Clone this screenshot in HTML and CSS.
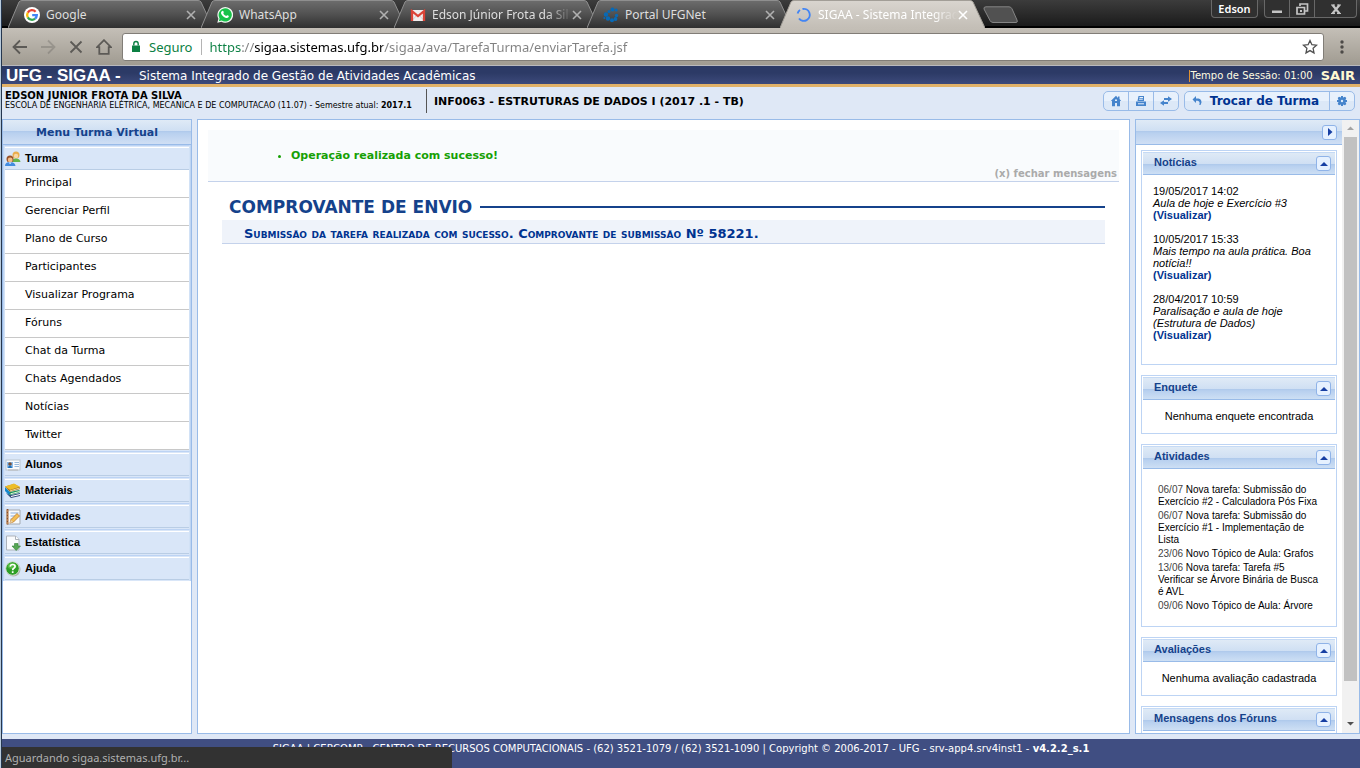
FILE: index.html
```html
<!DOCTYPE html>
<html lang="pt-BR">
<head>
<meta charset="utf-8">
<title>SIGAA - Sistema Integrado de Gestão de Atividades Acadêmicas</title>
<link rel="stylesheet" href="styles.css">
</head>
<body>
<svg class="defs" aria-hidden="true">
  <defs>
    <linearGradient id="tab-dark" x1="0" y1="0" x2="0" y2="1"><stop offset="0" stop-color="#6d6d6d"/><stop offset=".45" stop-color="#545454"/><stop offset="1" stop-color="#303030"/></linearGradient>
    <linearGradient id="tab-light" x1="0" y1="0" x2="0" y2="1"><stop offset="0" stop-color="#d9d5cf"/><stop offset="1" stop-color="#c3beb6"/></linearGradient>
    <symbol id="shape" viewBox="0 0 205 28" preserveAspectRatio="none"><path d="M0 28 L11 2 Q12 .5 14 .5 H190 Q192 .5 193 2 L205 28"/></symbol>
  </defs>
</svg>
<div class="window">
  <header class="browser">
    <div class="strip">
      <nav class="tabs" aria-label="Guias">
        <div class="tab">
          <svg class="tab-bg" aria-hidden="true"><use href="#shape"/></svg>
          <svg class="fav" viewBox="0 0 16 16"><circle cx="8" cy="8" r="8" fill="#fff"/><g fill="none" stroke-width="2.3"><path d="M11.6 4.7A4.8 4.8 0 0 0 3.8 5.6" stroke="#ea4335"/><path d="M3.8 5.6a4.8 4.8 0 0 0 0 4.8" stroke="#fbbc05"/><path d="M3.8 10.4a4.8 4.8 0 0 0 7.3 1.2" stroke="#34a853"/><path d="M11.1 11.6A4.8 4.8 0 0 0 12.8 8.1H8.2" stroke="#4285f4"/></g></svg>
          <span class="tab-name">Google</span>
          <button class="tab-x" aria-label="Fechar guia"><svg viewBox="0 0 10 10"><path d="M1 1l8 8M9 1L1 9"/></svg></button>
        </div>
        <div class="tab">
          <svg class="tab-bg" aria-hidden="true"><use href="#shape"/></svg>
          <svg class="fav" viewBox="0 0 16 16"><path d="M.3 15.8l1.1-4A7.9 7.9 0 1 1 4.4 14.800z" fill="#f2f8f2"/><path d="M1.800 14.300l.8-2.900A6.600 6.600 0 1 1 4.700 13.500z" fill="#18c24a"/><path d="M5.300 3.900c.5-.4 1 0 1.200.6.4 1 .3 1-.2 1.700.6 1.300 1.600 2.200 2.900 2.800.8-.9.800-1 1.800-.5 1 .5.900.6.700 1.300-.5 1.300-2 1.400-3.300.9-2.100-.8-3.400-2.200-4.200-3.900-.4-1-.2-2.200 1.100-2.900z" fill="#fff"/></svg>
          <span class="tab-name">WhatsApp</span>
          <button class="tab-x" aria-label="Fechar guia"><svg viewBox="0 0 10 10"><path d="M1 1l8 8M9 1L1 9"/></svg></button>
        </div>
        <div class="tab">
          <svg class="tab-bg" aria-hidden="true"><use href="#shape"/></svg>
          <svg class="fav" viewBox="0 0 16 16"><path d="M1 3h14v11H1z" fill="#f1eeee"/><path d="M3 12.500l4-4.500M13 12.500L9 8" stroke="#d5d0d0"/><path d="M2 14V4.200l6 4.900 6-4.900V14" fill="none" stroke="#db4437" stroke-width="2.300"/></svg>
          <span class="tab-name fade">Edson Júnior Frota da Sil</span>
          <button class="tab-x" aria-label="Fechar guia"><svg viewBox="0 0 10 10"><path d="M1 1l8 8M9 1L1 9"/></svg></button>
        </div>
        <div class="tab">
          <svg class="tab-bg" aria-hidden="true"><use href="#shape"/></svg>
          <svg class="fav" viewBox="0 0 16 16"><g fill="#0869b5"><circle cx="9.500" cy="2.500" r="2"/><circle cx="13.200" cy="3" r="1.500"/><circle cx="6" cy="4.500" r="1.500"/><circle cx="3" cy="7.500" r="2.200"/><circle cx="5" cy="11.500" r="2.200"/><circle cx="9" cy="13.200" r="2"/><circle cx="12.500" cy="12" r="1.900"/><circle cx="13.500" cy="8.500" r="1.700"/><circle cx="1.300" cy="11" r="1"/></g></svg>
          <span class="tab-name">Portal UFGNet</span>
          <button class="tab-x" aria-label="Fechar guia"><svg viewBox="0 0 10 10"><path d="M1 1l8 8M9 1L1 9"/></svg></button>
        </div>
        <div class="tab active">
          <svg class="tab-bg" aria-hidden="true"><use href="#shape"/></svg>
          <svg class="fav" viewBox="0 0 16 16"><path d="M6.500 2A6 6 0 1 1 3 11.500M1.600 6.500A6 6 0 0 1 4 3" fill="none" stroke="#4285f4" stroke-width="1.900"/></svg>
          <span class="tab-name fade">SIGAA - Sistema Integrad</span>
          <button class="tab-x" aria-label="Fechar guia"><svg viewBox="0 0 10 10"><path d="M1 1l8 8M9 1L1 9"/></svg></button>
        </div>
      </nav>
      <button class="new-tab" aria-label="Nova guia"><svg viewBox="0 0 36 18"><path d="M3 .8H26q2 0 3 2L34 14q1 2.500-1 2.500H10q-2 0-3-2L1 3Q.500.800 3 .800z" fill="#515151" stroke="#858585"/></svg></button>
      <div class="controls">
        <button class="profile">Edson</button>
        <div class="win-buttons">
          <button aria-label="Minimizar"><svg viewBox="0 0 14 14"><path d="M2 8.500h10v2.500H2z" fill="#c5c5c5"/></svg></button>
          <button aria-label="Restaurar"><svg viewBox="0 0 14 14"><path d="M5 4V2h7.500v7H10M2 5.500h7.500v6.500H2z" fill="none" stroke="#c5c5c5" stroke-width="1.700"/><path d="M5 8h2v2H5z" fill="#c5c5c5"/></svg></button>
          <button class="wide" aria-label="Fechar"><svg viewBox="0 0 14 14"><path d="M3.500 3l7 8.500M10.500 3l-7 8.500" stroke="#c5c5c5" stroke-width="2.200"/><path d="M2 3h4M8 3h4M2 11.500h4M8 11.500h4" stroke="#c5c5c5"/></svg></button>
        </div>
      </div>
    </div>
    <div class="toolbar">
      <button class="tool" aria-label="Voltar"><svg viewBox="0 0 16 16"><path d="M15 8H2M8 1.500L1.500 8 8 14.500"/></svg></button>
      <button class="tool off" aria-label="Avançar"><svg viewBox="0 0 16 16"><path d="M1 8h13M8 1.500L14.500 8 8 14.500"/></svg></button>
      <button class="tool" aria-label="Parar"><svg viewBox="0 0 16 16"><path d="M2.500 2.500l11 11M13.500 2.500l-11 11"/></svg></button>
      <button class="tool" aria-label="Página inicial"><svg viewBox="0 0 16 16"><path d="M8 1.200L1 8.200h2.300v6.600h9.400V8.200H15z"/></svg></button>
      <div class="omnibox">
        <svg class="lock" viewBox="0 0 10 12"><path d="M1 5h8v6.500H1z" fill="#0b8043"/><path d="M2.800 5V3.200a2.200 2.200 0 0 1 4.400 0V5" fill="none" stroke="#0b8043" stroke-width="1.400"/></svg>
        <label class="secure" for="url">Seguro</label>
        <input class="url" id="url" type="text" value="https://sigaa.sistemas.ufg.br/sigaa/ava/TarefaTurma/enviarTarefa.jsf">
        <button class="star" aria-label="Favoritar"><svg viewBox="0 0 16 16"><path d="M8 1.500l1.900 4.200 4.600.5-3.400 3.100.9 4.600L8 11.600l-4 2.300.9-4.600L1.500 6.200l4.600-.5z" fill="none" stroke="#505050" stroke-width="1.300"/></svg></button>
      </div>
      <button class="more" aria-label="Menu"><svg viewBox="0 0 4 14"><circle cx="2" cy="2" r="1.700"/><circle cx="2" cy="7" r="1.700"/><circle cx="2" cy="12" r="1.700"/></svg></button>
    </div>
  </header>

  <div class="page">
    <header class="banner">
      <h1>UFG - SIGAA -</h1>
      <span class="system">Sistema Integrado de Gestão de Atividades Acadêmicas</span>
      <span class="session">Tempo de Sessão: 01:00</span>
      <a class="exit" href="#">SAIR</a>
    </header>
    <section class="info">
      <div class="user">
        <strong>EDSON JUNIOR FROTA DA SILVA</strong>
        <span>ESCOLA DE ENGENHARIA ELÉTRICA, MECANICA E DE COMPUTACAO (11.07) - Semestre atual: <b>2017.1</b></span>
      </div>
      <h2>INF0063 - ESTRUTURAS DE DADOS I (2017 .1 - TB)</h2>
      <div class="group">
        <button aria-label="Início"><svg viewBox="0 0 12 12"><path d="M6 .8L.8 6H2v5.200h3V8h2v3.200h3V6h1.200L9.500 4V1.500H8V3z"/><path d="M5 4.500h2v1.500H5z" fill="#e3eefb"/></svg></button>
        <button aria-label="Imprimir"><svg viewBox="0 0 12 12"><path d="M3.500 1h5.500v5H2.500zM1 6.500h10v4.500H1z"/><path d="M4.500 2.500h3.500M4 4.200h3.800M3 8.800h6" stroke="#e8f1fb"/></svg></button>
        <button aria-label="Alternar"><svg viewBox="0 0 12 12"><path d="M8 1.200L12 4 8 6.800V5H4V3h4zM4 5.200L0 8l4 2.800V9h4V7H4z"/></svg></button>
      </div>
      <div class="group">
        <button class="switch"><svg viewBox="0 0 12 12"><path d="M1.500 4.500L5 1v2.400h2.500Q10.500 4 10.500 7.500L9.500 10 8.300 10Q9.500 6 6.500 5.700H5V8z"/></svg>Trocar de Turma</button>
        <button aria-label="Configurações"><svg viewBox="0 0 12 12"><path d="M5 1h2v1.500L9 1.700 10.300 3l-.8 2H11v2H9.500l.8 2L9 10.300l-2-.8V11H5V9.500l-2 .8L1.700 9l.8-2H1V5h1.500l-.8-2L3 1.700l2 .8z"/><circle cx="6" cy="6" r="1.200" fill="#dcebfb"/></svg></button>
      </div>
    </section>

    <main class="columns">
      <nav class="panel menu">
        <h2 class="bar">Menu Turma Virtual</h2>
        <div class="sections">
          <section>
            <h3><svg viewBox="0 0 16 16"><circle cx="11" cy="4" r="3.500" fill="#e9ad4d"/><circle cx="11" cy="5" r="2.200" fill="#f9d6a5"/><path d="M7 11q0-3.500 4-3.500t4.500 3.500z" fill="#65b64c"/><circle cx="5" cy="8" r="3.500" fill="#985229"/><circle cx="5.200" cy="9" r="2.400" fill="#f1bb89"/><path d="M0 15q0-4 5-4t5.500 4z" fill="#438ce0"/><path d="M3.500 11.500l1.600 1.500 1.600-1.500z" fill="#fff"/></svg>Turma</h3>
            <ul>
              <li><a href="#">Principal</a></li>
              <li><a href="#">Gerenciar Perfil</a></li>
              <li><a href="#">Plano de Curso</a></li>
              <li><a href="#">Participantes</a></li>
              <li><a href="#">Visualizar Programa</a></li>
              <li><a href="#">Fóruns</a></li>
              <li><a href="#">Chat da Turma</a></li>
              <li><a href="#">Chats Agendados</a></li>
              <li><a href="#">Notícias</a></li>
              <li><a href="#">Twitter</a></li>
            </ul>
          </section>
          <section><h3><svg viewBox="0 0 16 16"><rect x="1" y="3" width="14" height="10" fill="#fbfcfd" stroke="#bcc5d0"/><path d="M2 5h6v6H2z" fill="#8cbceb"/><circle cx="5" cy="7" r="1.800" fill="#7a5035"/><path d="M3 11q0-2.500 2-2.500t2 2.500z" fill="#1c70ba"/><path d="M9.500 5.500H14M9.500 7.500H14M9.500 9.500H14" stroke="#99b9db"/><path d="M3 13h10" stroke="#b6b6b6"/></svg>Alunos</h3></section>
          <section><h3><svg viewBox="0 0 16 16"><path d="M1 10l5 5 9-2v-3L6 12z" fill="#354b7c"/><path d="M6 13.500l9-2" stroke="#fff"/><path d="M.5 7L5 12l9.500-2.500V7L5 9z" fill="#199455"/><path d="M5.500 10.800l9-2.300" stroke="#e7f4dc"/><path d="M0 4v4l4 4 1-3z" fill="#1587cc"/><path d="M0 3.500L9 1l6 3.200V6L5 8.800z" fill="#a46b10"/><path d="M0 3.500L9 .5l6 3.200L5 7z" fill="#edbd29"/><path d="M5 7.900l10-3" stroke="#fff2bf" stroke-width=".8"/></svg>Materiais</h3></section>
          <section><h3><svg viewBox="0 0 16 16"><path d="M2 1h13v14H2z" fill="#f8fafc" stroke="#a4a9af"/><path d="M2.500 0v15.500" stroke="#8d5228" stroke-width="1.800"/><path d="M1 2h3M1 5h3M1 8h3M1 11h3M1 14h3" stroke="#d9a77d"/><path d="M5.500 4h8M5.500 7h7M5.500 10h4" stroke="#8baddb"/><path d="M5 14l1-3.500 6-6 2.500 2.500-6 6z" fill="#f4bf53" stroke="#ba782c" stroke-width=".8"/><path d="M5 14l1-3 2 2z" fill="#ead2ad"/></svg>Atividades</h3></section>
          <section><h3><svg viewBox="0 0 16 16"><path d="M1.500 1h9l3.500 3.500V15H1.500z" fill="#fafbfd" stroke="#adb3bb"/><path d="M10.500 1v3.500H14" fill="#fff" stroke="#adb3bb"/><path d="M9.500 8.500h3.500V11h2.500L11.200 15.500 7 11h2.500z" fill="#55a553" stroke="#318035" stroke-width=".6"/></svg>Estatística</h3></section>
          <section><h3><svg viewBox="0 0 16 16"><circle cx="8.500" cy="8.500" r="7" fill="#aeb4ae"/><circle cx="7.500" cy="7.500" r="6.800" fill="#2d9f27" stroke="#d2ded2"/><ellipse cx="7" cy="5" rx="4.500" ry="3" fill="#66c94f" opacity=".7"/><path d="M5.200 5.700q.2-2.200 2.500-2.200t2.400 2q0 1-1.300 1.800Q7.700 7.900 7.700 9.200M7.700 10.300v1.700" fill="none" stroke="#fff" stroke-width="1.700"/></svg>Ajuda</h3></section>
        </div>
      </nav>

      <section class="panel content">
        <div class="notice">
          <ul><li>Operação realizada com sucesso!</li></ul>
          <a href="#">(x) fechar mensagens</a>
        </div>
        <div class="receipt">
          <h2><span>COMPROVANTE DE ENVIO</span></h2>
          <p>Submissão da tarefa realizada com sucesso. Comprovante de submissão Nº 58221.</p>
        </div>
      </section>

      <aside class="panel side">
        <div class="side-main">
          <div class="bar"><button class="mini" aria-label="Recolher painel"><svg viewBox="0 0 12 12"><path d="M4 2v8l4.500-4z"/></svg></button></div>
          <div class="modules">
            <section class="module">
              <h3>Notícias <button class="mini" aria-label="Recolher Notícias"><svg viewBox="0 0 12 12"><path d="M2 8h8L6 4z"/></svg></button></h3>
              <div class="news">
                <p>19/05/2017 14:02<br><i>Aula de hoje e Exercício #3</i><br><a href="#">(Visualizar)</a></p>
                <p>10/05/2017 15:33<br><i>Mais tempo na aula prática. Boa notícia!!</i><br><a href="#">(Visualizar)</a></p>
                <p>28/04/2017 10:59<br><i>Paralisação e aula de hoje (Estrutura de Dados)</i><br><a href="#">(Visualizar)</a></p>
              </div>
            </section>
            <section class="module">
              <h3>Enquete <button class="mini" aria-label="Recolher Enquete"><svg viewBox="0 0 12 12"><path d="M2 8h8L6 4z"/></svg></button></h3>
              <p class="empty">Nenhuma enquete encontrada</p>
            </section>
            <section class="module">
              <h3>Atividades <button class="mini" aria-label="Recolher Atividades"><svg viewBox="0 0 12 12"><path d="M2 8h8L6 4z"/></svg></button></h3>
              <ul class="activity">
                <li><time>06/07</time> Nova tarefa: Submissão do Exercício #2 - Calculadora Pós Fixa</li>
                <li><time>06/07</time> Nova tarefa: Submissão do Exercício #1 - Implementação de Lista</li>
                <li><time>23/06</time> Novo Tópico de Aula: Grafos</li>
                <li><time>13/06</time> Nova tarefa: Tarefa #5<br>Verificar se Árvore Binária de Busca é AVL</li>
                <li><time>09/06</time> Novo Tópico de Aula: Árvore</li>
              </ul>
            </section>
            <section class="module">
              <h3>Avaliações <button class="mini" aria-label="Recolher Avaliações"><svg viewBox="0 0 12 12"><path d="M2 8h8L6 4z"/></svg></button></h3>
              <p class="empty">Nenhuma avaliação cadastrada</p>
            </section>
            <section class="module">
              <h3>Mensagens dos Fóruns <button class="mini" aria-label="Recolher Mensagens dos Fóruns"><svg viewBox="0 0 12 12"><path d="M2 8h8L6 4z"/></svg></button></h3>
              <p class="empty"></p>
            </section>
          </div>
        </div>
        <div class="scroll" aria-hidden="true">
          <svg viewBox="0 0 17 17"><path d="M5 10h7L8.500 6.500z" fill="#a3a3a3"/></svg>
          <div class="track"><div class="thumb"></div></div>
          <svg viewBox="0 0 17 17"><path d="M5 6h7L8.500 9.500z" fill="#505050"/></svg>
        </div>
      </aside>
    </main>
    <footer class="footer">SIGAA | CERCOMP - CENTRO DE RECURSOS COMPUTACIONAIS - (62) 3521-1079 / (62) 3521-1090 | Copyright © 2006-2017 - UFG - srv-app4.srv4inst1 - <b>v4.2.2_s.1</b></footer>
  </div>
  <div class="status" role="status">Aguardando sigaa.sistemas.ufg.br...</div>
</div>
</body>
</html>
```
FILE: styles.css
```css
* { box-sizing: border-box; }
body { margin: 0; font-family: "DejaVu Sans", Verdana, sans-serif; font-size: 11px; color: #000; }
h1, h2, h3, p, ul { margin: 0; padding: 0; }
ul { list-style: none; }
a { text-decoration: none; color: inherit; }
button { margin: 0; padding: 0; border: 0; background: none; font: inherit; color: inherit; display: flex; align-items: center; justify-content: center; }
svg { display: block; flex: none; }
.defs { position: absolute; width: 0; height: 0; }
.window { height: 100vh; display: flex; flex-direction: column; position: relative; overflow: hidden; background: #26374f; border-left: 1px solid #b9cbdc; padding-left: 1px; }

/* Browser chrome */
.browser { flex: none; font-family: "Noto Sans", sans-serif; }
.strip { height: 28px; display: flex; background: linear-gradient(#3c3c3c, #1b1b1b 26px, #000 26px); }
.tabs { display: flex; padding-left: 6px; }
.tab { position: relative; isolation: isolate; width: 205px; height: 28px; margin-right: -12px; padding: 2px 15px 0 16px; display: flex; align-items: center; color: #dedede; font-size: 12px; }
.tab-bg { position: absolute; inset: 0; width: 100%; height: 100%; z-index: -1; fill: url(#tab-dark); stroke: #8f8f8f; overflow: visible; }
.active { z-index: 1; color: #fff; }
.active .tab-bg { fill: url(#tab-light); stroke: #a29e97; }
.fav { width: 16px; height: 16px; margin-right: 6px; }
.tab-name { flex: 1; min-width: 0; white-space: nowrap; line-height: 18px; }
.fade { -webkit-mask-image: linear-gradient(90deg, #000 82%, transparent); mask-image: linear-gradient(90deg, #000 82%, transparent); }
.tab-x { width: 10px; margin-right: 2px; }
.tab-x svg { width: 10px; height: 10px; stroke: #b0b0b0; stroke-width: 1.6; }
.active .tab-x svg { stroke: #fff; }
.new-tab { width: 36px; height: 18px; margin: 6px 0 0 10px; }
.new-tab svg { width: 36px; height: 18px; }
.controls { margin-left: auto; display: flex; gap: 6px; padding-right: 3px; color: #fff; font-size: 11px; font-weight: 600; }
.profile { width: 47px; height: 18px; border: 1px solid #686868; border-top: 0; border-radius: 0 0 4px 4px; background: #303030; }
.win-buttons { display: flex; height: 18px; border: 1px solid #686868; border-top: 0; border-radius: 0 0 4px 4px; background: #303030; }
.win-buttons button { width: 25px; border-right: 1px solid #686868; }
.win-buttons .wide { width: 41px; border: 0; }
.win-buttons svg { width: 14px; height: 14px; }
.toolbar { height: 38px; display: flex; align-items: center; gap: 12px; padding: 0 11px 0 10px; background: linear-gradient(#c4bfb7, #a09b91); border-bottom: 1px solid #b9b9bd; }
.tool { width: 16px; }
.tool svg { width: 16px; height: 16px; fill: none; stroke: #5c5a56; stroke-width: 1.8; }
.off { opacity: .3; }
.omnibox { flex: 1; height: 28px; margin: 0 -1px 0 -2px; display: flex; align-items: center; background: #fff; border: 1px solid #817d77; border-radius: 3px; padding: 0 5px 0 8px; font-size: 13px; }
.lock { width: 10px; height: 13px; margin-right: 8px; }
.secure { color: #0b8043; padding-right: 9px; border-right: 1px solid #b4b4b4; line-height: 16px; }
.url { flex: 1; min-width: 0; border: 0; outline: 0; padding: 0 0 0 7px; font: inherit; color: #808080; background: linear-gradient(90deg, #0b8043 39px, #808080 39px 53px, #000 53px 181px, #808080 181px); -webkit-background-clip: text; background-clip: text; -webkit-text-fill-color: transparent; }
.star svg { width: 16px; height: 16px; }
.more { width: 14px; }
.more svg { width: 4px; height: 14px; fill: #4c4a47; }

/* Application */
.page { flex: 1; min-height: 0; display: flex; flex-direction: column; background: #dfe8f6; }
.banner { flex: none; height: 21px; display: flex; align-items: center; padding: 2px 5px 0 4px; color: #fff; background: linear-gradient(#2c3a66 0 7px, #3d4a7b); border-bottom: 3px solid #e2b268; }
.banner h1 { font: bold 17px/16px "Liberation Sans", Arial, sans-serif; width: 133px; }
.system { font-size: 12px; }
.session { margin-left: auto; padding-left: 1px; border-left: 1px solid #e0912f; color: #fffbe0; font-size: 10px; line-height: 12px; }
.exit { margin-left: 8px; color: #fff8d2; font-size: 13px; line-height: 14px; font-weight: bold; }
.info { flex: none; height: 32px; display: flex; align-items: center; gap: 5px; padding: 0 5px 4px 3px; }
.user { font-size: 8px; line-height: 10px; display: flex; flex-direction: column; min-width: 422px; padding: 2px 3px 2px 0; border-right: 1px solid #555; }
.user strong { font-size: 10px; }
.info h2 { font-size: 11px; margin: 0 auto 0 2px; }
.group { display: flex; height: 20px; border: 1px solid #99bbe8; border-radius: 5px; color: #15428b; background: linear-gradient(#e8f1fc 50%, #dce8f7 50%); }
.group button { width: 25px; }
.group button:first-child { width: 24px; }
.group button + button { border-left: 1px solid #99bbe8; }
.group svg { width: 12px; height: 12px; fill: #4584cc; }
.group .switch.switch { width: auto; gap: 7px; padding: 0 10px 0 6px; font-size: 12px; font-weight: bold; color: #003390; }
.columns { flex: 1; min-height: 0; display: grid; grid-template-columns: 190px 1fr 225px; gap: 5px; padding-bottom: 5px; }
.panel { min-width: 0; overflow: hidden; background: #fff; border: 1px solid #99bbe8; }
.bar { height: 25px; display: flex; align-items: center; justify-content: center; color: #15428b; font-size: 11px; border-bottom: 1px solid #99bbe8; background: linear-gradient(#dfeaf6 0, #cfdff3 11px, #adc8eb 11px, #b8d0ef 13px, #d0dff4); }

.sections { padding: 0 1px; background: #bfd5f3; }
.sections section { border: 1px solid #d2e2f6; border-width: 1px 1px 0; border-top-color: #bcd3f4; padding: 1px 0; background: #d9e6f8; }
.sections h3 { height: 23px; display: flex; align-items: center; gap: 4px; padding-bottom: 2px; font: bold 11px/14px "Liberation Sans", Arial, sans-serif; background: #d9e6f8; border-top: 1px solid #fff; border-bottom: 1px solid #b9cde5; }
.sections svg { width: 16px; height: 16px; align-self: flex-end; }
.sections ul { background: #fff; }
.sections li { height: 28px; padding-left: 20px; line-height: 26px; border-bottom: 1px solid #c8c8c8; }

.content { padding: 10px; }
.notice { height: 52px; padding: 18px 2px 0 83px; background: #f9fbfd; border-bottom: 1px solid #c4d2eb; font-weight: bold; }
.notice ul { list-style: disc; color: #16a004; line-height: 16px; }
.notice a { display: block; text-align: right; color: #aaa; font-size: 10px; line-height: 16px; margin-top: 2px; }
.receipt { padding: 15px 14px 0; }
.receipt h2 { display: flex; align-items: center; gap: 8px; padding-left: 7px; color: #15428b; font-size: 17px; line-height: 20px; }
.receipt h2::after { content: ""; flex: 1; height: 2px; background: #15428b; }
.receipt p { margin-top: 3px; padding: 6px 22px 0; height: 24px; color: #003390; background: #eff3fa; border-bottom: 1px solid #c4d2eb; font-size: 13px; font-weight: bold; line-height: 16px; font-variant: small-caps; }

.side { display: flex; font-family: "Liberation Sans", Arial, sans-serif; }
.side-main { flex: 1; min-width: 0; }
.side .bar { justify-content: flex-end; padding-right: 5px; }
.mini { width: 15px; height: 15px; border: 1px solid #8fb3e8; border-radius: 3px; background: #e6f1ff; }
.mini svg { width: 12px; height: 12px; fill: #173fa3; }
.modules { display: flex; flex-direction: column; gap: 10px; padding: 5px; }
.module { border: 1px solid #bdd4f4; padding: 1px; }
.module h3 { height: 23px; display: flex; align-items: center; justify-content: space-between; padding: 0 4px 2px 11px; color: #15428b; font-size: 11px; border-bottom: 1px solid #99bbe8; background: linear-gradient(#c5daf5 1px, #dfeaf6 1px, #cfdff3 12px, #adc8eb 12px, #b8d0ef 14px, #cddff4); }
.module .mini { margin-top: 3px; }
.news { padding: 10px 18px 22px 10px; line-height: 12px; }
.news p { margin-bottom: 12px; }
.news p:last-child { margin: 0; }
.news a { color: #003390; font-weight: bold; }
.empty { height: 32px; line-height: 32px; text-align: center; }
.activity { padding: 15px 10px 11px 15px; font-size: 10px; line-height: 12px; }
.activity li { margin-bottom: 2px; }
.activity time { color: #444; }
.scroll { width: 17px; display: flex; flex-direction: column; background: #f1f1f1; }
.scroll svg { width: 17px; height: 17px; }
.track { flex: 1; padding: 0 2px; }
.thumb { height: 94%; background: #c1c1c1; }
.footer { flex: none; height: 29px; padding-top: 4px; text-align: center; color: #fff; background: #404e82; font-size: 10px; line-height: 12px; }
.status { position: absolute; left: 1px; bottom: 0; width: 450px; height: 21px; padding-left: 3px; line-height: 21px; background: #323232; color: #b0b0b0; border-radius: 0 3px 0 0; font-family: "Noto Sans", sans-serif; font-size: 11px; }
```
